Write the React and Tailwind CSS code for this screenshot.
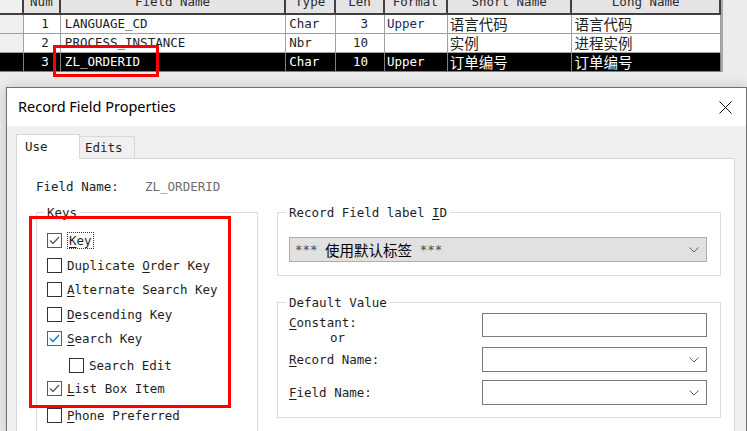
// Record field grid + "Record Field Properties" dialog (Use tab)

import React from 'react';

const MONO = "font-['DejaVu_Sans_Mono','Liberation_Mono',monospace] text-[12.5px]";
const CJK = "font-['Noto_Sans_CJK_SC','Noto_Sans',sans-serif] text-[14.5px]";

const COLS = [
  { w: 'w-[24px]', label: '' },
  { w: 'w-[37px]', label: 'Num' },
  { w: 'w-[226px]', label: 'Field Name' },
  { w: 'w-[50px]', label: 'Type' },
  { w: 'w-[49px]', label: 'Len' },
  { w: 'w-[63px]', label: 'Format' },
  { w: 'w-[125px]', label: 'Short Name' },
  { w: 'w-[149px]', label: 'Long Name' },
];

const ROWS = [
  { num: '1', name: 'LANGUAGE_CD', type: 'Char', len: '3', fmt: 'Upper', short: '语言代码', long: '语言代码' },
  { num: '2', name: 'PROCESS_INSTANCE', type: 'Nbr', len: '10', fmt: '', short: '实例', long: '进程实例' },
  { num: '3', name: 'ZL_ORDERID', type: 'Char', len: '10', fmt: 'Upper', short: '订单编号', long: '订单编号', selected: true },
];

const Chevron = () => (
  <svg width="10" height="6" viewBox="0 0 10 6" className="shrink-0">
    <path d="M0.5 0.5 L5 5 L9.5 0.5" fill="none" stroke="#606060" strokeWidth="1" />
  </svg>
);

const Check = ({ color }) => (
  <svg width="13" height="13" viewBox="0 0 13 13">
    <path d="M2 6.5 L5 9.5 L11 3" fill="none" stroke={color} strokeWidth="1.3" />
  </svg>
);

const CheckBox = ({ checked, blue }) => {
  const border = blue ? 'border-[#0078d7]' : checked ? 'border-[#5a5a5a]' : 'border-[#333333]';
  return (
    <span className={`flex h-[15px] w-[15px] shrink-0 items-center justify-center border bg-white ${border}`}>
      {checked && <Check color={blue ? '#0078d7' : '#5a5a5a'} />}
    </span>
  );
};

const KeyRow = ({ label, ul, checked, blue, focus, indent, mt }) => {
  const idx = ul != null ? label.indexOf(ul) : -1;
  const text = idx < 0 ? label : (
    <>
      {label.slice(0, idx)}
      <u className="underline-offset-2">{ul}</u>
      {label.slice(idx + 1)}
    </>
  );
  return (
    <div className={`flex h-[20px] items-center gap-[5px] ${indent ? 'ml-[22px]' : ''} ${mt}`}>
      <CheckBox checked={checked} blue={blue} />
      <span className={focus ? 'border border-dotted border-[#333] px-[1px] leading-[15px]' : 'leading-[15px]'}>{text}</span>
    </div>
  );
};

const Grid = () => (
  <div className={`w-[723px] border-r-2 border-[#a8a8a8] ${MONO} text-[#1e1e1e]`}>
    <div className="flex h-[15px]">
      {COLS.map((c, i) => (
        <div
          key={i}
          className={`${c.w} h-[15px] overflow-hidden border-r-2 border-b-2 border-[#404040] ${i === 0 ? 'bg-[#f0f0f0]' : 'bg-[#e4e4e4]'} text-center`}
        >
          <div className="-mt-[6px] leading-[15px] text-[#2a2a2a]">{c.label}</div>
        </div>
      ))}
    </div>
    {ROWS.map((r) => {
      const cell = r.selected
        ? 'h-[19px] border-r border-b border-[#808080] bg-black text-white'
        : 'h-[19px] border-r border-b border-[#a0a0a0] bg-white';
      return (
        <div key={r.num} className="flex leading-[18px]">
          <div className={`w-[24px] ${r.selected ? 'h-[19px] border-r border-b border-[#808080] bg-black' : 'h-[19px] border-r border-b border-[#a0a0a0] bg-[#efefef]'}`} />
          <div className={`w-[37px] pr-[11px] text-right ${cell}`}>{r.num}</div>
          <div className={`w-[226px] pl-[4px] ${cell}`}>{r.name}</div>
          <div className={`w-[50px] pl-[3px] ${cell}`}>{r.type}</div>
          <div className={`w-[49px] pr-[16px] text-right ${cell}`}>{r.len}</div>
          <div className={`w-[63px] pl-[2px] ${cell} ${r.selected ? 'text-[#dfe6ff]' : 'text-[#1c2a5a]'}`}>{r.fmt}</div>
          <div className={`w-[125px] pl-[2px] ${cell} ${CJK} leading-[18px]`}>{r.short}</div>
          <div className={`w-[149px] pl-[2px] ${cell} ${CJK} leading-[18px]`}>{r.long}</div>
        </div>
      );
    })}
  </div>
);

const Input = ({ combo, h }) => (
  <div className={`flex w-[225px] ${h} items-center justify-end border border-[#7a7a7a] bg-white pr-[7px]`}>
    {combo && <Chevron />}
  </div>
);

const Dialog = () => (
  <div className="ml-[6px] mt-[15px] w-[741px] border border-[#707070] bg-white shadow-[0_0_12px_rgba(0,0,0,0.18)]">
    <div className="flex h-[38px] items-center justify-between pl-[11px] pr-[14px]">
      <span className="font-['Noto_Sans',sans-serif] text-[14.5px] text-black">Record Field Properties</span>
      <svg width="13" height="13" viewBox="0 0 13 13">
        <path d="M0.5 0.5 L12.5 12.5 M12.5 0.5 L0.5 12.5" stroke="#111" strokeWidth="1" />
      </svg>
    </div>

    <div className={`h-[310px] bg-[#f0f0f0] pl-[9px] pt-[8px] ${MONO} text-[#1e1e1e]`}>
      <div className="flex items-end">
        <div className="relative z-10 -mb-[1px] flex h-[25px] w-[64px] items-center border border-b-0 border-[#d9d9d9] bg-white pb-[2px] pl-[8px] leading-[15px]">
          Use
        </div>
        <div className="flex h-[22px] w-[55px] items-center border border-l-0 border-b-0 border-[#d9d9d9] bg-[#f0f0f0] pl-[5px] leading-[15px]">
          Edits
        </div>
      </div>

      <div className="h-[300px] w-[719px] border border-[#d9d9d9] bg-white pl-[19px] pt-[20px]">
        <div className="flex h-[15px] items-center leading-[15px]">
          <span className="w-[109px] text-[#222]">Field Name:</span>
          <span className="text-[#6e6e6e]">ZL_ORDERID</span>
        </div>

        <div className="mt-[11px] flex gap-[19px]">
          <fieldset className="h-[260px] w-[222px] border border-[#dcdcdc] pl-[7px] pt-[10px]">
            <legend className="px-[3px] leading-[15px]">Keys</legend>
            <div className="pl-[3px]">
              <KeyRow label="Key" ul="K" checked focus mt="" />
              <KeyRow label="Duplicate Order Key" ul="O" mt="mt-[5px]" />
              <KeyRow label="Alternate Search Key" ul="A" mt="mt-[4px]" />
              <KeyRow label="Descending Key" ul="D" mt="mt-[5px]" />
              <KeyRow label="Search Key" ul="S" checked blue mt="mt-[4px]" />
              <KeyRow label="Search Edit" indent mt="mt-[7px]" />
              <KeyRow label="List Box Item" ul="L" checked mt="mt-[3px]" />
              <KeyRow label="Phone Preferred" ul="P" mt="mt-[7px]" />
            </div>
          </fieldset>

          <div className="w-[444px]">
            <fieldset className="border border-[#dcdcdc] pb-[13px] pl-[8px] pr-[13px] pt-[17px]">
              <legend className="px-[3px] leading-[15px]">
                Record Field label <u className="underline-offset-2">I</u>D
              </legend>
              <div className="ml-[3px] flex h-[25px] items-center justify-between border border-[#adadad] bg-[#e1e1e1] pl-[5px] pr-[7px]">
                <span className="flex items-center whitespace-pre leading-[18px]">
                  <span className="text-[#4a4a4a]">*** </span>
                  <span className={`${CJK} text-black`}>使用默认标签</span>
                  <span className="text-[#4a4a4a]"> ***</span>
                </span>
                <Chevron />
              </div>
            </fieldset>

            <fieldset className="mt-[19px] border border-[#dcdcdc] pb-[12px] pl-[8px] pr-[13px] pt-[3px]">
              <legend className="px-[3px] leading-[15px]">Default Value</legend>
              <div className="pl-[3px]">
                <div className="flex h-[34px]">
                  <div className="w-[193px] pt-[2px] leading-[15px]">
                    <div><u className="underline-offset-2">C</u>onstant:</div>
                    <div className="pl-[41px] leading-[16px]">or</div>
                  </div>
                  <Input h="h-[24px]" />
                </div>
                <div className="flex h-[25px] items-center">
                  <div className="w-[193px] leading-[15px]"><u className="underline-offset-2">R</u>ecord Name:</div>
                  <Input combo h="h-[25px]" />
                </div>
                <div className="mt-[8px] flex h-[25px] items-center">
                  <div className="w-[193px] leading-[15px]"><u className="underline-offset-2">F</u>ield Name:</div>
                  <Input combo h="h-[25px]" />
                </div>
              </div>
            </fieldset>
          </div>
        </div>
      </div>
    </div>
  </div>
);

export default function App() {
  return (
    <div className="relative h-[431px] w-[747px] overflow-hidden bg-[#ececec]">
      <Grid />
      <Dialog />

      {/* red annotation boxes */}
      <div className="pointer-events-none absolute left-[53px] top-[45px] h-[32px] w-[106px] border-[3px] border-[#ff0000]" />
      <div className="pointer-events-none absolute left-[29px] top-[216px] h-[192px] w-[202px] border-[3px] border-[#ff0000]" />
    </div>
  );
}
